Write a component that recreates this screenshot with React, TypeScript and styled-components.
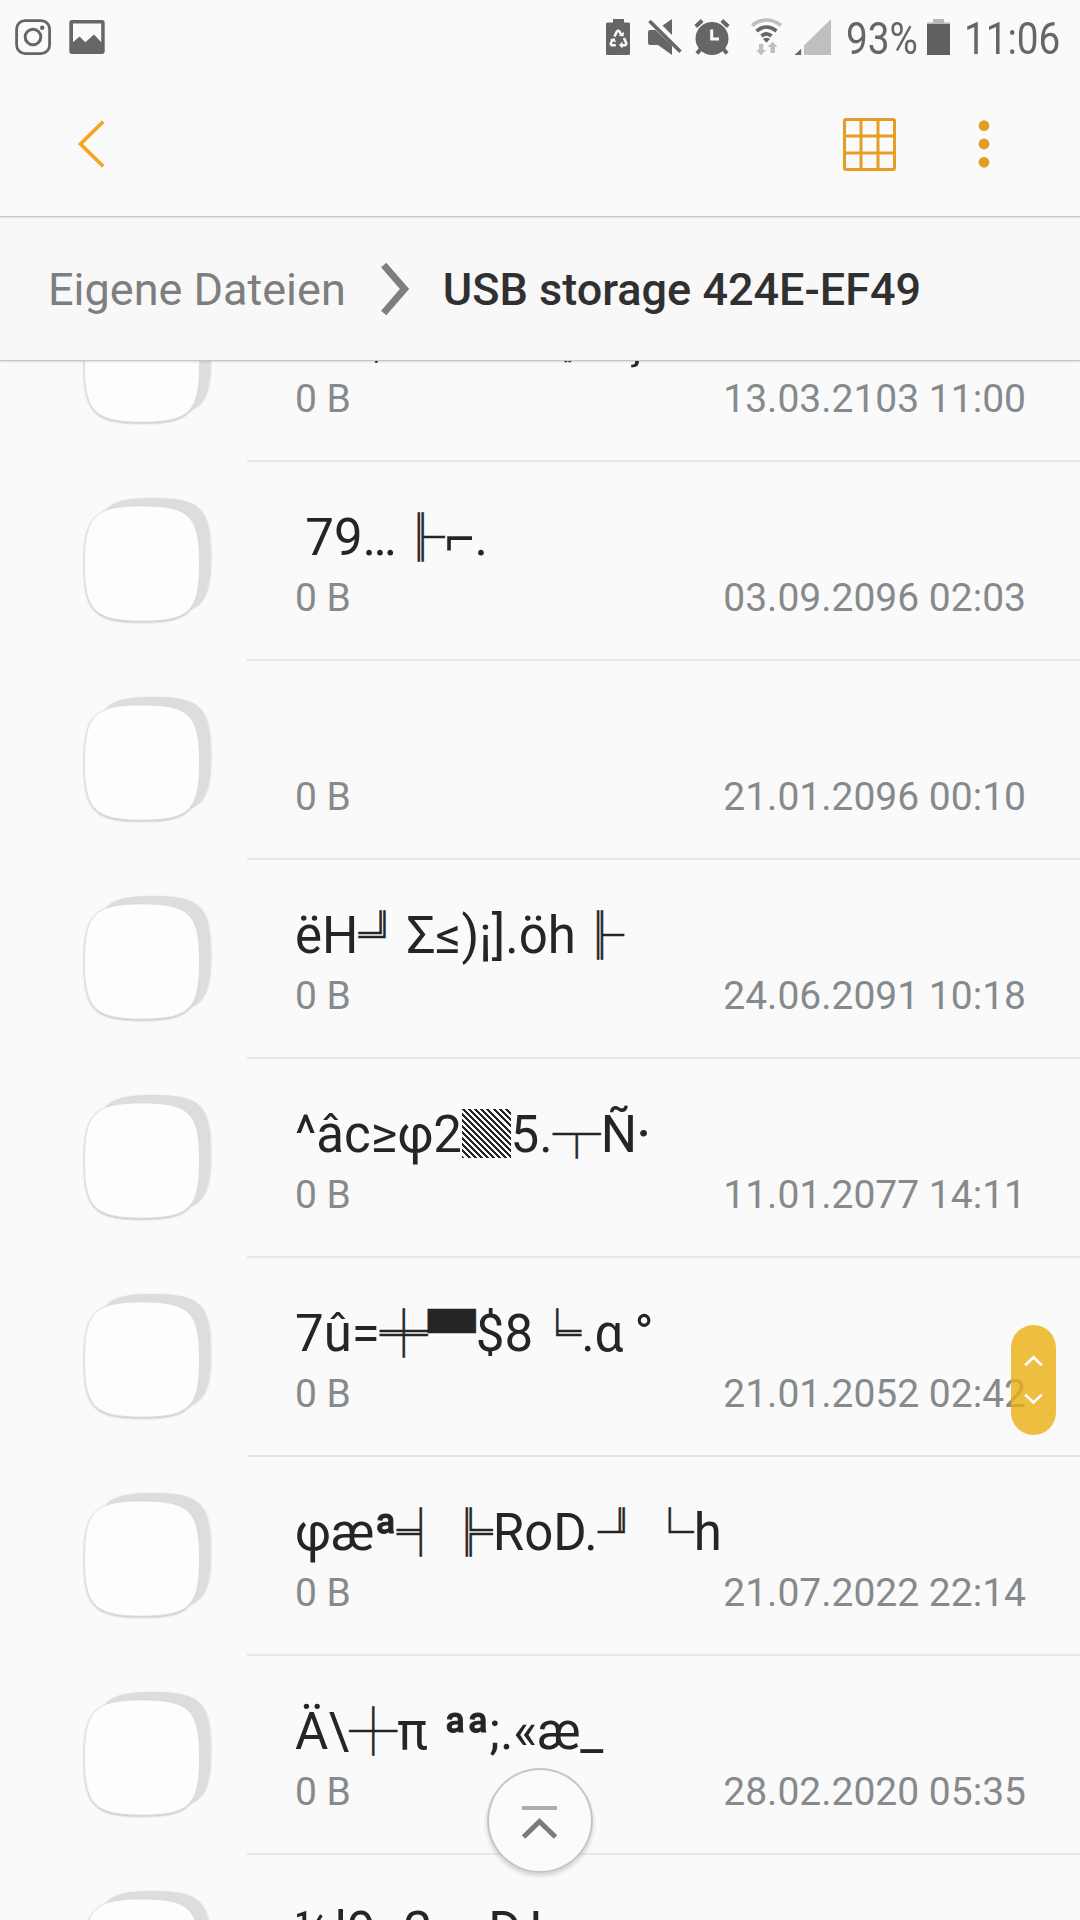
import React from "react";
import styled, { createGlobalStyle } from "styled-components";

const GlobalStyle = createGlobalStyle`
  * { box-sizing: border-box; }
  html, body { margin: 0; padding: 0; background: #fafafa; }
`;

const Screen = styled.div`
  display: flex;
  flex-direction: column;
  position: relative;
  width: 1080px;
  height: 1920px;
  overflow: hidden;
  background: #fafafa;
  font-family: Roboto, "Noto Sans", "Noto Sans CJK SC", sans-serif;
`;

const StatusBar = styled.div`
  display: flex;
  justify-content: space-between;
  height: 72px;
  flex: none;
  padding: 18px 19px 0 14px;
  color: #666;
`;

const StatusGroup = styled.div<{ $gap?: number }>`
  display: flex;
  align-items: flex-start;
  gap: ${(p) => p.$gap ?? 0}px;
`;

const Glyph = styled.svg<{ $before?: number }>`
  display: block;
  flex: none;
  margin-left: ${(p) => p.$before ?? 0}px;
`;

const StatusText = styled.div<{ $width: number; $before: number }>`
  width: ${(p) => p.$width}px;
  height: 38px;
  margin-left: ${(p) => p.$before}px;
  font-size: 45px;
  line-height: 42px;
  white-space: nowrap;
  span {
    display: inline-block;
    transform: scaleX(0.86);
    transform-origin: left center;
  }
`;

const AppBar = styled.header`
  display: flex;
  align-items: center;
  justify-content: space-between;
  flex: none;
  height: 144px;
  padding: 0 90px 0 76px;
`;

const Actions = styled.div`
  display: flex;
  align-items: center;
  gap: 81px;
`;

const IconButton = styled.button`
  display: flex;
  padding: 0;
  border: 0;
  background: none;
`;

const Breadcrumb = styled.nav`
  display: flex;
  align-items: center;
  flex: none;
  position: relative;
  z-index: 1;
  height: 145px;
  padding: 0 48px;
  border-top: 1px solid #c6c8c7;
  border-bottom: 1px solid #c6c8c7;
  background: #f8f8f8;
  box-shadow: inset 0 2px 2px -1px #e2e2e2, 0 1px 2px rgba(0, 0, 0, 0.13);
`;

const Crumb = styled.span<{ $current?: boolean }>`
  padding-top: 2px;
  font-size: 45px;
  line-height: 54px;
  font-weight: ${(p) => (p.$current ? 500 : 400)};
  color: ${(p) => (p.$current ? "#303030" : "#7e7e7e")};
`;

const FileList = styled.ul`
  flex: none;
  margin: -98px 0 0;
  padding: 0;
  list-style: none;
`;

const Row = styled.li`
  display: flex;
  height: 199px;
`;

const ThumbCell = styled.div`
  flex: none;
  width: 247px;
  padding: 32px 0 0 80px;
`;

const Details = styled.div`
  flex: 1;
  padding: 46px 54px 0 48px;
  border-bottom: 2px solid #e5e6e6;
`;

const FileName = styled.div<{ $wordSpacing?: number }>`
  height: 60px;
  font-size: 51px;
  line-height: 60px;
  color: #252525;
  white-space: pre;
  word-spacing: ${(p) => p.$wordSpacing ?? 0}px;
`;

const Wide = styled.span`
  font-family: "Noto Sans CJK SC", sans-serif;
  font-size: 48px;
  line-height: 0;
  -webkit-text-stroke: 0.5px #252525;
`;

const Shade = styled.span`
  display: inline-block;
  width: 49px;
  height: 49px;
  margin-right: -0.5px;
  vertical-align: -6px;
  overflow: hidden;
  line-height: 49px;
  color: transparent;
  background: repeating-linear-gradient(45deg, #252525 0 2.1px, #fafafa 2.1px 4.3px);
`;

const Heavy = styled.span`
  -webkit-text-stroke: 1px #252525;
`;

const Meta = styled.div`
  display: flex;
  justify-content: space-between;
  margin-top: 7px;
  font-size: 39px;
  line-height: 46px;
  color: #868a8d;
`;

const ScrollHandle = styled.div`
  display: flex;
  flex-direction: column;
  align-items: center;
  position: absolute;
  left: 1011px;
  top: 1325px;
  width: 45px;
  height: 110px;
  padding-top: 30px;
  gap: 26px;
  border-radius: 23px;
  background: rgba(235, 175, 19, 0.8);
`;

const TopButton = styled.button`
  display: flex;
  justify-content: center;
  position: absolute;
  left: 487px;
  top: 1768px;
  width: 106px;
  height: 105px;
  padding: 35px 2px 0 0;
  border: 2px solid #c5c5c5;
  border-radius: 50%;
  background: rgba(251, 251, 251, 0.93);
  box-shadow: 0 3px 4px rgba(0, 0, 0, 0.16);
`;

const SQUIRCLE = "M0 57.500C0 10 10 0 57.500 0S115 10 115 57.500S105 115 57.500 115S0 105 0 57.500Z";

const Thumbnail = () => (
  <Glyph width="140" height="140" viewBox="-4.500 -12 140 140">
    <defs>
      <filter id="soft" x="-10%" y="-10%" width="120%" height="125%">
        <feDropShadow dx="0" dy="1" stdDeviation="0.9" floodColor="#000" floodOpacity="0.3" />
      </filter>
    </defs>
    <g filter="url(#soft)">
      <path d={SQUIRCLE} transform="translate(11 -8)" fill="#dddddd" />
      <path d={SQUIRCLE} fill="#fdfdfd" stroke="#d2d2d2" strokeWidth="0.6" />
    </g>
  </Glyph>
);

interface FileEntry {
  name: string;
  date: string;
  wordSpacing?: number;
}

const files: FileEntry[] = [
  { name: "47┼20631║4ç", date: "13.03.2103 11:00" },
  { name: " 79…╟⌐.", date: "03.09.2096 02:03", wordSpacing: -2.4 },
  { name: " ", date: "21.01.2096 00:10" },
  { name: "ëH╝Σ≤)¡].öh╟", date: "24.06.2091 10:18" },
  { name: "^âc≥φ2▒5.┬Ñ·", date: "11.01.2077 14:11" },
  { name: "7û=╪▀$8╘.α °", date: "21.01.2052 02:42", wordSpacing: -1.5 },
  { name: "φæª╡╠RoD.╜└h", date: "21.07.2022 22:14" },
  { name: "Ä\\┼π ªª;.«æ_", date: "28.02.2020 05:35", wordSpacing: 3.2 },
  { name: "½l9=2==D,L", date: "" },
];

const renderName = (name: string) =>
  name.split(/(▒|[\u2500-\u2590\u2592-\u259f]+|[ª·]+)/).map((part, i) => {
    if (part === "▒") return <Shade key={i}>{part}</Shade>;
    if (/^[\u2500-\u259f]/.test(part)) return <Wide key={i}>{part}</Wide>;
    if (/^[ª·]/.test(part)) return <Heavy key={i}>{part}</Heavy>;
    return part;
  });

export default function App() {
  return (
    <>
      <GlobalStyle />
      <Screen>
        <StatusBar>
          <StatusGroup $gap={16}>
            <Glyph width="38" height="38" viewBox="14 18 38 38" fill="none" stroke="#666">
              <rect x="16.6" y="20.6" width="33" height="33" rx="8.5" strokeWidth="2.8" />
              <circle cx="33" cy="37" r="7.8" strokeWidth="3" />
              <circle cx="42.2" cy="27.7" r="2.2" fill="#666" stroke="none" />
            </Glyph>
            <Glyph width="38" height="38" viewBox="68 18 38 38" fill="#666">
              <path
                fillRule="evenodd"
                d="M72 20h30q2.700 0 2.700 2.700v28.600q0 2.700-2.700 2.700h-30q-2.700 0-2.700-2.700v-28.600q0-2.700 2.700-2.700ZM73 23.500v18.700L79.500 36.600L85.300 42.300L94 34.600L101.200 42.300V23.500Z"
              />
            </Glyph>
          </StatusGroup>
          <StatusGroup>
            <Glyph width="24" height="38" viewBox="606 18 24 38">
              <path d="M613 19h11v3.500h4.500q1.500 0 1.500 1.500v29.500q0 1.500-1.500 1.500h-21q-1.500 0-1.500-1.500v-29.500q0-1.500 1.500-1.500h5.500Z" fill="#666" />
              <g fill="none" stroke="#fafafa" strokeWidth="2.600">
                <path d="M614.500 36.500l2.400-5q1.300-1.500 2.600 0l1.500 3M624 38l2.200 5q.2 2-1.500 2.300h-3.500M615.800 45.300h-3.500q-1.900-.4-1.300-2.300l1.700-3.500" />
              </g>
              <path d="M618.500 35.500l5 1l.5-4.500ZM622.500 41.500v7l-3.500-3.500ZM610 39.500l4.500-1.500l1.500 4.500Z" fill="#fafafa" />
            </Glyph>
            <Glyph $before={17} width="35" height="38" viewBox="647 18 35 38" fill="#666">
              <path d="M662.500 25.500L672 19v16ZM648 32q0-2 2-2h5.500L672 45.500V55L658 45h-8q-2 0-2-2Z" />
              <path d="M649.500 21L680.500 51.700" stroke="#666" strokeWidth="3.600" fill="none" />
            </Glyph>
            <Glyph $before={12} width="36" height="38" viewBox="694 18 36 38" fill="none" stroke="#666">
              <circle cx="712" cy="38.500" r="16.500" fill="#666" stroke="none" />
              <path d="M695.700 26.500l6.500-6M728.300 26.500l-6.500-6" strokeWidth="4" />
              <path d="M701.500 48l-4.500 5.500M722.500 48l4.500 5.500" strokeWidth="4" />
              <path d="M711.700 29.500v9.500h7.300" stroke="#fafafa" strokeWidth="3" />
            </Glyph>
            <Glyph $before={20} width="34" height="38" viewBox="750 18 34 38" fill="none">
              <path d="M752 25.500q14.500-11 29 0" stroke="#bfbfbf" strokeWidth="3.600" />
              <path d="M756.500 31q10-8 20 0M761.500 36q5-4.200 10 0" stroke="#666" strokeWidth="3.600" />
              <path d="M763 39q3.500-2.500 7 0l-3.500 3.800Z" fill="#666" />
              <path d="M759 44h4.200v6h3l-5.100 5.300l-5.100-5.300h3ZM770.500 53h4.500v-6h2.500l-4.900-5.300l-5 5.300h2.900Z" fill="#bfbfbf" />
            </Glyph>
            <Glyph $before={10} width="38" height="38" viewBox="794 18 38 38">
              <path d="M794.500 55l6.700-6.300V55Z" fill="#666" />
              <path d="M804 55V45.500L831 19v36Z" fill="#bfbfbf" />
            </Glyph>
            <StatusText $before={14} $width={74}>
              <span>93%</span>
            </StatusText>
            <Glyph $before={7} width="24" height="38" viewBox="927 18 24 38">
              <path d="M933 19h11v3.500h6v2h-23v-2h6Z" fill="#b8b8b8" />
              <path d="M927 24h23v31h-23Z" fill="#606060" />
            </Glyph>
            <StatusText $before={13} $width={97}>
              <span>11:06</span>
            </StatusText>
          </StatusGroup>
        </StatusBar>

        <AppBar>
          <IconButton>
            <Glyph width="30" height="50" viewBox="76 119 30 50" fill="none" stroke="#f5a623" strokeWidth="3.800">
              <path d="M103.300 121.500L80.500 144L103.300 166.500" />
            </Glyph>
          </IconButton>
          <Actions>
            <IconButton>
              <Glyph width="55" height="55" viewBox="842.500 116.500 55 55" fill="none" stroke="#e69d25" strokeWidth="3">
                <rect x="845" y="119" width="50" height="50" rx="1.500" />
                <path d="M861.500 119v50M878.500 119v50M845 135.500h50M845 152.500h50" />
              </Glyph>
            </IconButton>
            <IconButton>
              <Glyph width="12" height="50" viewBox="978 119 12 50" fill="#e69d25">
                <circle cx="984" cy="125.700" r="5.400" />
                <circle cx="984" cy="144" r="5.400" />
                <circle cx="984" cy="162.300" r="5.400" />
              </Glyph>
            </IconButton>
          </Actions>
        </AppBar>

        <Breadcrumb>
          <Crumb>Eigene Dateien</Crumb>
          <Glyph $before={35} width="62" height="54" viewBox="381 261 62 54" fill="none" stroke="#7e7e7e" strokeWidth="7">
            <path d="M383.700 264L404.500 288L383.700 312" />
          </Glyph>
          <Crumb $current>USB storage 424E-EF49</Crumb>
        </Breadcrumb>

        <FileList>
          {files.map((file) => (
            <Row key={file.name}>
              <ThumbCell>
                <Thumbnail />
              </ThumbCell>
              <Details>
                <FileName $wordSpacing={file.wordSpacing}>{renderName(file.name)}</FileName>
                {file.date && (
                  <Meta>
                    <span>0 B</span>
                    <span>{file.date}</span>
                  </Meta>
                )}
              </Details>
            </Row>
          ))}
        </FileList>

        <ScrollHandle>
          <svg width="19" height="12" viewBox="0 0 19 12" fill="none" stroke="#fff" strokeWidth="2.600">
            <path d="M1.200 10.200L9.500 2.300L17.800 10.200" />
          </svg>
          <svg width="19" height="12" viewBox="0 0 19 12" fill="none" stroke="#fff" strokeWidth="2.600">
            <path d="M1.200 1.600L9.500 9.500L17.800 1.600" />
          </svg>
        </ScrollHandle>

        <TopButton>
          <svg width="37" height="36" viewBox="521 1804 37 36" fill="none">
            <path d="M522 1807H557" stroke="#adadad" strokeWidth="4" />
            <path d="M523.500 1836L539.500 1820.500L555.500 1836" stroke="#7b7b7b" strokeWidth="5" />
          </svg>
        </TopButton>
      </Screen>
    </>
  );
}
